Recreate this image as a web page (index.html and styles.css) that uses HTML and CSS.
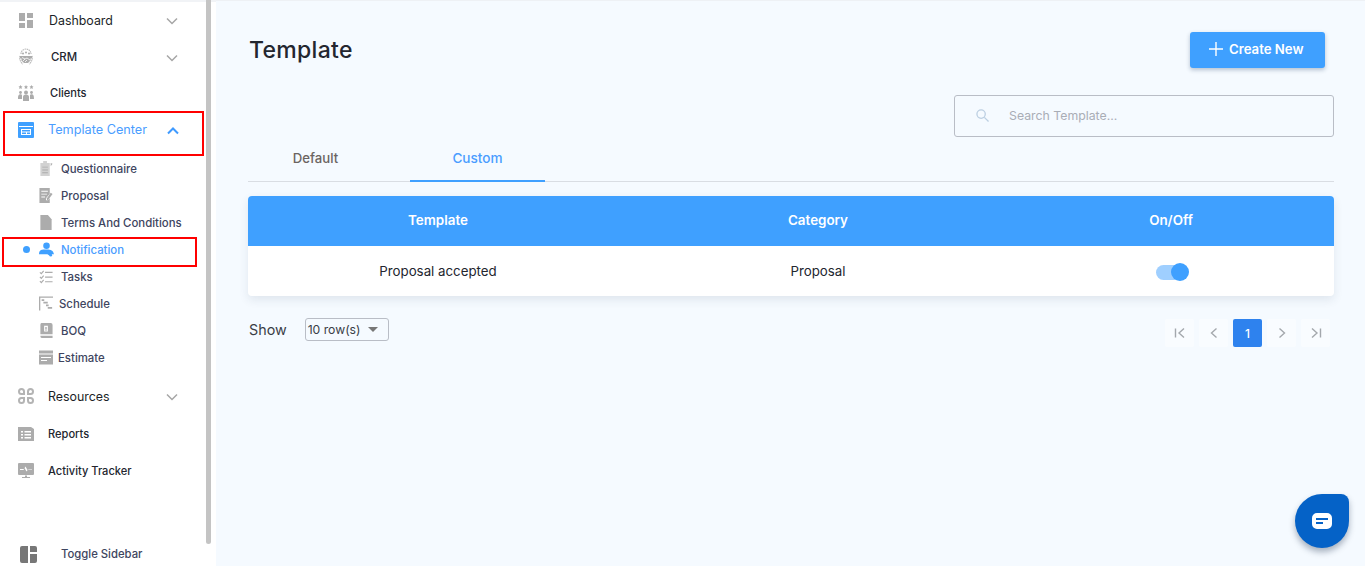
FILE: index.html
```html
<!DOCTYPE html>
<html lang="en">
<head>
<meta charset="utf-8">
<title>Template</title>
<link rel="stylesheet" href="styles.css">
</head>
<body>
<div class="app">
  <aside class="sidebar">
    <div class="scrollbar"></div>
    <div class="mark mark-a"></div>
    <div class="mark mark-b"></div>
    <nav class="nav">
      <a class="item big">
        <svg class="ic" viewBox="0 0 16 16"><path d="M1 1h6v8H1zM9 1h6v5H9zM1 11h6v5H1zM9 8h6v8H9z"/></svg>
        <span class="label shift-1">Dashboard</span>
        <svg class="chev" viewBox="0 0 12 8"><path d="M1 1.500l5 5 5-5"/></svg>
      </a>
      <a class="item">
        <svg class="ic ic-tall" viewBox="0 0 16 18"><path class="line" d="M3 6C3 3 5.500 1 8 1s5 2 5 5M2 8c-1 3 1 7 3 8M14 8c1 3-1 7-3 8"/><circle cx="5" cy="5.500" r="1"/><circle cx="8" cy="4.500" r="1"/><circle cx="11" cy="5.500" r="1"/><path d="M2 8h12v2l-2 1 1 1-2 2-1 1H6l-1-1-2-2 1-1-2-1z"/><path class="cut" d="M4 9.500l3 1.500 2-1 3 2M7 11l-2 2M9 12l-2 2"/></svg>
        <span class="label shift-3">CRM</span>
        <svg class="chev" viewBox="0 0 12 8"><path d="M1 1.500l5 5 5-5"/></svg>
      </a>
      <a class="item small">
        <svg class="ic" viewBox="0 0 16 16"><path d="M2.500 0l.7 1.300 1.300.2-1 1 .3 1.400-1.300-.7-1.300.7.300-1.400-1-1 1.300-.2zM8 0l.7 1.300 1.300.2-1 1 .3 1.400L8 3.200l-1.300.7.300-1.400-1-1 1.300-.2zM13.500 0l.7 1.300 1.300.2-1 1 .3 1.400-1.300-.7-1.300.7.300-1.400-1-1 1.300-.2z"/><circle cx="2.500" cy="7.500" r="1.400"/><circle cx="8" cy="7.500" r="2"/><circle cx="13.500" cy="7.500" r="1.400"/><path d="M0 14c0-4 .8-4.800 2.500-4.800S4 10 4 11v3zM16 14c0-4-.8-4.800-2.500-4.800S12 10 12 11v3zM5 16v-4c0-1.500 1-2.500 3-2.500s3 1 3 2.500v4z"/></svg>
        <span class="label shift-2">Clients</span>
      </a>
      <a class="item big active">
        <svg class="ic" viewBox="0 0 16 16"><path fill-rule="evenodd" d="M1 0h14a1 1 0 011 1v14a1 1 0 01-1 1H1a1 1 0 01-1-1V1a1 1 0 011-1zM1 4v1h14V4zM3 7v6h10V7zM4 8h8v1.500H4zM4 10.500h4V12H4zM9 10.500h3V12H9z"/></svg>
        <span class="label">Template Center</span>
        <svg class="chev" viewBox="0 0 12 8"><path d="M1 6.500l5-5 5 5"/></svg>
      </a>
      <div class="sub">
        <a class="subitem">
          <svg class="sic" viewBox="0 0 14 16"><path class="pale" d="M1 2h3V0h4v2h3v14H1z"/><path d="M12 2l2 1-2 2.500zM3 6h6v1H3zM3 9h6v1H3zM3 12h6v1H3z"/></svg>
          <span class="label">Questionnaire</span>
        </a>
        <a class="subitem">
          <svg class="sic" viewBox="0 0 14 16"><path fill-rule="evenodd" d="M0 0h11v6l-4 5v2h2l2-2v5H0zM2 3v1h7V3zM2 6v1h6V6zM2 9v1h4V9z"/><path d="M12 5l2 1.500L9 13H8v-2z"/></svg>
          <span class="label">Proposal</span>
        </a>
        <a class="subitem">
          <svg class="sic" viewBox="0 0 14 16"><path d="M1 0h8l4 4.500V16H1z"/></svg>
          <span class="label">Terms And Conditions</span>
        </a>
        <a class="subitem current">
          <i class="dot"></i>
          <svg class="sic" viewBox="0 0 16 16"><circle cx="8" cy="4" r="3.500"/><path d="M0 13c0-5 3-5 8-5s7 1 8 5h-3l-2 1.500L9 13z"/><circle cx="12.500" cy="14" r="1.500"/></svg>
          <span class="label">Notification</span>
        </a>
        <a class="subitem">
          <svg class="sic" viewBox="0 0 14 16"><path d="M6 3h8v1.200H6zM6 8h8v1.200H6zM6 13h8v1.200H6z"/><path class="tick" d="M.5 3.500l1.500 1.500 2.500-3M.5 8.500l1.500 1.500 2.500-3M.5 13l1.500 1.500 2.500-3"/></svg>
          <span class="label">Tasks</span>
        </a>
        <a class="subitem back-2">
          <svg class="sic" viewBox="0 0 16 16"><path d="M0 0h16v1.500H1.500V16H0z"/><path d="M3 3h3v2H3zM5 6h5v2H5zM8 9h3v2H8zM10 12h5v2h-5z"/></svg>
          <span class="label">Schedule</span>
        </a>
        <a class="subitem">
          <svg class="sic" viewBox="0 0 14 16"><path fill-rule="evenodd" d="M2 0h10a2 2 0 012 2v10H1V2a2 2 0 011-2zM1 13.500h13V16H3a2 2 0 01-2-2zM5 3v6h4V3z"/><path d="M6 4.500h2V6H6zM6 7h2v1H6z"/></svg>
          <span class="label">BOQ</span>
        </a>
        <a class="subitem back-3">
          <svg class="sic" viewBox="0 0 14 14"><path fill-rule="evenodd" d="M0 0h14v3H0zM0 4h14v10H0zM2 6.500v1h10v-1zM2 9.500v1h6v-1z"/></svg>
          <span class="label">Estimate</span>
        </a>
      </div>
      <div class="lower">
        <a class="item big">
          <svg class="ic ic-res" viewBox="0 0 16 16"><path fill-rule="evenodd" d="M3.500 0A3.500 3.500 0 017 3.500V7H3.500a3.500 3.500 0 010-7zM3.500 2a1.500 1.500 0 000 3H5V3.500A1.500 1.500 0 003.500 2zM12.500 0a3.500 3.500 0 010 7H9V3.500A3.500 3.500 0 0112.500 0zM12.500 2A1.500 1.500 0 0011 3.500V5h1.500a1.500 1.500 0 000-3zM3.500 16a3.500 3.500 0 010-7H7v3.500A3.500 3.500 0 013.500 16zM3.500 14A1.500 1.500 0 005 12.500V11H3.500a1.500 1.500 0 000 3zM12.500 16A3.500 3.500 0 019 12.500V9h3.500a3.500 3.500 0 010 7zM12.500 14a1.500 1.500 0 000-3H11v1.500a1.500 1.500 0 001.500 1.500z"/></svg>
          <span class="label">Resources</span>
          <svg class="chev" viewBox="0 0 12 8"><path d="M1 1.500l5 5 5-5"/></svg>
        </a>
        <a class="item small">
          <svg class="ic" viewBox="0 0 16 14"><path fill-rule="evenodd" d="M0 0h13l3 2v12H0zM3 4v1.500h2V4zM6.500 4v1.500H13V4zM3 7v1.500h2V7zM6.500 7v1.500H13V7zM3 10v1.500h2V10zM6.500 10v1.500H13V10z"/></svg>
          <span class="label">Reports</span>
        </a>
        <a class="item small">
          <svg class="ic" viewBox="0 0 16 16"><path fill-rule="evenodd" d="M1 0h14a1 1 0 011 1v10a1 1 0 01-1 1H1a1 1 0 01-1-1V1a1 1 0 011-1zM2 6v1h3.500l1-2 2 3.500L10 6.500h4V6h-3.500l-1 1-2-3.500L6 6z"/><path d="M7 12.500h2V14h3v1H4v-1h3z"/></svg>
          <span class="label">Activity Tracker</span>
        </a>
      </div>
    </nav>
    <a class="toggle">
      <svg class="tic" viewBox="0 0 17 17"><path d="M2 0h6v17H2a2 2 0 01-2-2V2a2 2 0 012-2zM10 0h5a2 2 0 012 2v4h-7zM10 8h7v7a2 2 0 01-2 2h-5z"/></svg>
      <span class="label">Toggle Sidebar</span>
    </a>
  </aside>

  <main class="main">
    <header class="head">
      <h1 class="title">Template</h1>
      <button class="create">
        <svg class="plus" viewBox="0 0 14 14"><path d="M7 0v14M0 7h14"/></svg>
        <span>Create New</span>
      </button>
    </header>
    <div class="search">
      <svg class="mag" viewBox="0 0 14 14"><circle cx="5.500" cy="5.500" r="4.500"/><path d="M9 9l4.500 4.500"/></svg>
      <span>Search Template...</span>
    </div>
    <div class="tabs">
      <div class="tab">Default</div>
      <div class="tab on">Custom</div>
    </div>
    <table class="table">
      <thead>
        <tr><th class="c1">Template</th><th class="c2">Category</th><th>On/Off</th></tr>
      </thead>
      <tbody>
        <tr>
          <td>Proposal accepted</td>
          <td>Proposal</td>
          <td><span class="switch"><i class="knob"></i></span></td>
        </tr>
      </tbody>
    </table>
    <div class="foot">
      <span class="show">Show</span>
      <div class="rows"><span>10 row(s)</span><i class="caret"></i></div>
      <div class="pager">
        <div class="pg"><svg viewBox="0 0 12 12"><path d="M1.500 1.500v9M10 1.500L5 6l5 4.500"/></svg></div>
        <div class="pg"><svg viewBox="0 0 12 12"><path d="M8.500 1.500L3.500 6l5 4.500"/></svg></div>
        <div class="pg cur">1</div>
        <div class="pg"><svg viewBox="0 0 12 12"><path d="M3.500 1.500L8.500 6l-5 4.500"/></svg></div>
        <div class="pg"><svg viewBox="0 0 12 12"><path d="M10.500 1.500v9M2 1.500L7 6l-5 4.500"/></svg></div>
      </div>
    </div>
    <button class="chat" aria-label="Chat">
      <svg viewBox="0 0 20 16"><path fill-rule="evenodd" d="M5 0h10a5 5 0 015 5v6a5 5 0 01-5 5H5a5 5 0 01-5-5V5a5 5 0 015-5zM4 5v2h12V5zM4 9v2h7V9z"/></svg>
    </button>
  </main>
</div>
</body>
</html>
```
FILE: styles.css
```css
* { box-sizing: border-box; }
html, body { margin: 0; height: 100%; overflow: hidden; }
body { font-family: Inter, "Liberation Sans", sans-serif; color: #23262f; background: #f5faff; }
a { display: flex; align-items: center; color: inherit; text-decoration: none; }

.app { display: flex; height: 566px; }

.sidebar {
  position: relative;
  width: 216px;
  flex: none;
  height: 566px;
  display: flex;
  flex-direction: column;
  background: #fff;
  border-top: 2px solid #f1f3f6;
}
.scrollbar { position: absolute; left: 206px; top: -2px; width: 5px; height: 544px; background: #c4c4c4; border-radius: 0 0 3px 3px; }
.mark { position: absolute; border: 2px solid #f00; pointer-events: none; }
.mark-a { left: 3px; top: 109px; width: 201px; height: 45px; }
.mark-b { left: 2px; top: 235px; width: 195px; height: 30px; }

.nav { display: flex; flex-direction: column; }
.item { height: 36.500px; padding-left: 18px; font-size: 11.400px; font-weight: 500; color: #23262f; position: relative; }
.big { font-size: 12.400px; font-weight: 400; color: #1c1f28; }
.big.active { font-size: 12.700px; color: #4a9dff; }
.small { font-size: 11.100px; }
.ic { width: 16px; height: 16px; fill: #acacac; flex: none; margin-right: 14px; }
.ic-tall { height: 18px; }
.ic-res { fill: #b4b4b4; }
.line { fill: none; stroke: #bdbdbd; stroke-width: 1.200; stroke-dasharray: 1.500 .6; }
.cut { fill: none; stroke: #fff; stroke-width: .8; }
.pale { fill: #d2d2d2; }
.label { white-space: nowrap; }
.shift-3 { margin-left: 3px; }
.shift-2 { margin-left: 2px; }
.shift-1 { margin-left: 1px; }
.chev { position: absolute; left: 166px; top: 15px; width: 12px; height: 8px; fill: none; stroke: #a6a6a6; stroke-width: 1.500; }
.tick { fill: none; stroke: #acacac; stroke-width: 1.200; }

.active .ic { fill: #3fa0ff; }
.active .chev { stroke: #3f9aff; stroke-width: 2; left: 167px; }

.sub { display: flex; flex-direction: column; margin-top: 7px; }
.subitem { height: 27px; padding-left: 39px; font-size: 11.400px; font-weight: 500; color: #3e4560; position: relative; }
.sic { width: 14px; height: 15px; fill: #acacac; flex: none; margin-right: 8px; }
.back-2 .sic { margin-right: 6px; }
.back-3 .sic { margin-right: 5px; }
.current { color: #4a9dff; }
.current .sic { fill: #3fa0ff; width: 15px; margin-right: 7px; }
.dot { position: absolute; left: 23px; top: 10px; width: 7px; height: 7px; border-radius: 50%; background: #3fa0ff; }

.lower { margin-top: 6.500px; }
.lower .item { height: 37.500px; }

.toggle { margin-top: auto; height: 24px; padding-left: 20px; font-size: 11.300px; font-weight: 500; color: #3e4560; }
.tic { width: 17px; height: 17px; fill: #777; margin-right: 24px; }

.main {
  flex: 1;
  position: relative;
  display: flex;
  flex-direction: column;
  padding: 31px 31px 0 32px;
  border-top: 1px solid #eef1f5;
}
.head { display: flex; justify-content: space-between; align-items: center; height: 36px; }
.title { margin: 0 0 0 1px; font-size: 23px; font-weight: 500; letter-spacing: .3px; color: #23262f; }
.create {
  display: flex; align-items: center; gap: 6px;
  width: 135px; height: 36px; margin-right: 9px; padding: 0 0 2px 19px;
  background: #3fa0ff; color: #fff; border: 0; border-radius: 3px;
  box-shadow: 0 2px 4px rgba(30, 60, 100, .3);
  font: 600 13.200px Inter, "Liberation Sans", sans-serif;
}
.plus { width: 14px; height: 14px; fill: none; stroke: #fff; stroke-width: 1.400; }

.search {
  align-self: flex-end;
  display: flex; align-items: center;
  width: 380px; height: 42px; margin-top: 27px; padding: 0 0 1px 21px;
  border: 1px solid #b9bdc6; border-radius: 3px;
  font-size: 12.300px; color: #a9adb6;
}
.mag { width: 13px; height: 13px; margin-right: 20px; fill: none; stroke: #bccfe2; stroke-width: 1.400; }

.tabs { display: flex; gap: 27px; height: 45px; border-bottom: 1px solid #d9dde3; }
.tab { width: 135px; height: 45px; padding-top: 13px; text-align: center; font-size: 13.200px; font-weight: 500; color: #6b6461; }
.tab.on { color: #4a9dff; font-size: 13.600px; border-bottom: 2px solid #3fa0ff; }

.table {
  width: 1086px; margin-top: 14px; border-collapse: separate; border-spacing: 0; table-layout: fixed;
  background: #fff; border-radius: 4px;
  box-shadow: 0 4px 10px rgba(40, 60, 90, .1);
}
.c1, .c2 { width: 380px; }
th { height: 50px; padding: 0 0 2px; background: #3fa0ff; color: #fff; font-size: 13.400px; font-weight: 600; }
th:first-child { border-top-left-radius: 4px; }
th:last-child { border-top-right-radius: 4px; }
td { height: 50px; padding: 0; text-align: center; font-size: 13.300px; color: #23262f; }
.switch { display: inline-block; position: relative; width: 31px; height: 15px; margin-top: 6px; border-radius: 8px; background: #9fcfff; }
.knob { position: absolute; right: -2px; top: -2px; width: 18px; height: 18px; border-radius: 50%; background: #3fa0ff; }

.foot { display: flex; align-items: center; height: 30px; margin-top: 18px; }
.show { margin-left: 1px; font-size: 14.300px; color: #3a3d46; }
.rows {
  display: flex; align-items: center; gap: 7px;
  width: 84px; height: 23px; margin-left: 18px; padding-left: 2px;
  border: 1px solid #b9bdc6; border-radius: 3px;
  font-size: 12.200px; color: #3a3d46;
}
.caret { border: 5px solid transparent; border-top-color: #777; border-bottom: 0; }
.pager { display: flex; gap: 5px; margin: 8px 4px 0 auto; }
.pg { display: flex; align-items: center; justify-content: center; width: 29px; height: 28px; border-radius: 2px; background: #f9fcff; font-size: 12px; font-weight: 500; color: #fff; }
.pg svg { width: 12px; height: 12px; fill: none; stroke: #a4a8ad; stroke-width: 1.400; }
.pg.cur { background: #2e82ee; }

.chat {
  position: absolute; left: 1079px; top: 493px;
  display: flex; align-items: center; justify-content: center;
  width: 54px; height: 54px; padding: 0; border: 0;
  background: #0562c7; border-radius: 50% 8px 50% 50%;
  box-shadow: 0 4px 6px rgba(20, 40, 70, .35);
}
.chat svg { width: 20px; height: 16px; fill: #fff; }
```
